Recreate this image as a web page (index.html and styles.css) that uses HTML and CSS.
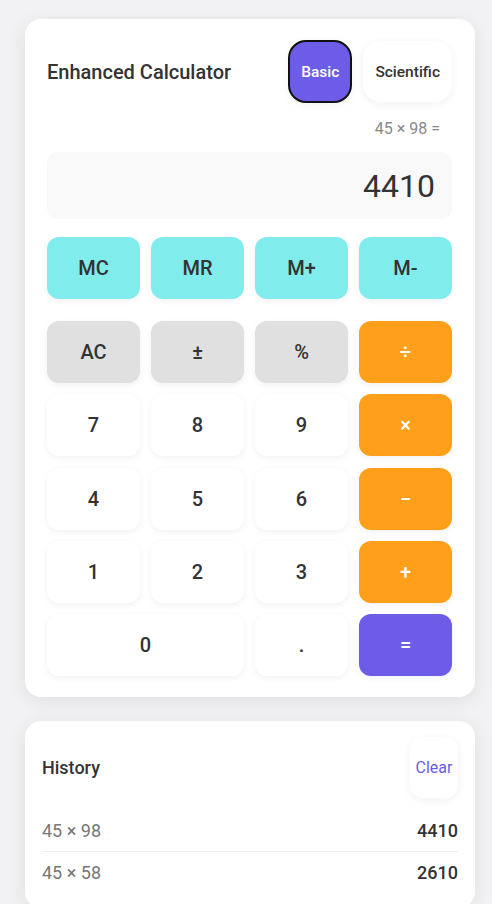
FILE: index.html
```html
<!DOCTYPE html>
<html lang="en">
<head>
<meta charset="utf-8">
<title>Enhanced Calculator</title>
<link rel="stylesheet" href="styles.css">
</head>
<body>
<main class="page">
  <section class="card calc">
    <header class="calc-header">
      <h1 class="title">Enhanced Calculator</h1>
      <div class="modes">
        <button class="mode mode-active">Basic</button>
        <button class="mode">Scientific</button>
      </div>
    </header>
    <div class="expression">45 × 98 =</div>
    <div class="display">4410</div>
    <div class="memory">
      <button class="key key-mem">MC</button>
      <button class="key key-mem">MR</button>
      <button class="key key-mem">M+</button>
      <button class="key key-mem">M-</button>
    </div>
    <div class="keys">
      <button class="key key-fn">AC</button>
      <button class="key key-fn">±</button>
      <button class="key key-fn">%</button>
      <button class="key key-op">÷</button>
      <button class="key">7</button>
      <button class="key">8</button>
      <button class="key">9</button>
      <button class="key key-op">×</button>
      <button class="key">4</button>
      <button class="key">5</button>
      <button class="key">6</button>
      <button class="key key-op">−</button>
      <button class="key">1</button>
      <button class="key">2</button>
      <button class="key">3</button>
      <button class="key key-op">+</button>
      <button class="key key-wide">0</button>
      <button class="key">.</button>
      <button class="key key-eq">=</button>
    </div>
  </section>
  <section class="card history">
    <header class="history-header">
      <h2 class="history-title">History</h2>
      <button class="clear">Clear</button>
    </header>
    <ul class="history-list">
      <li class="history-row"><span class="h-expr">45 × 98</span><span class="h-res">4410</span></li>
      <li class="history-row"><span class="h-expr">45 × 58</span><span class="h-res">2610</span></li>
    </ul>
  </section>
</main>
</body>
</html>
```

FILE: styles.css
```css
* { box-sizing: border-box; }
html, body { margin: 0; padding: 0; }
body {
  background: #f2f2f4;
  font-family: Roboto, "Liberation Sans", Arial, sans-serif;
  color: #333;
}
.page {
  padding: 19px 17px 0 25px;
  display: flex;
  flex-direction: column;
  gap: 24px;
}
.card {
  width: 450px;
  background: #fff;
  border-radius: 16px;
  box-shadow: 0 4px 20px rgba(0, 0, 0, 0.08);
}
.calc { padding: 21px 23px 21px 22px; }
.calc-header {
  display: flex;
  align-items: center;
  justify-content: space-between;
  height: 63px;
  margin-bottom: 16px;
}
.title {
  margin: 0;
  font-size: 20px;
  font-weight: 500;
  color: #333;
}
.modes { display: flex; align-items: center; gap: 11px; }
button {
  font-family: inherit;
  border: none;
  cursor: pointer;
}
.mode {
  height: 61px;
  padding: 0 12px;
  border-radius: 17px;
  background: #fff;
  color: #333;
  font-size: 15.5px;
  font-weight: 500;
  box-shadow: 0 2px 8px rgba(0, 0, 0, 0.06);
}
.mode-active {
  height: 63px;
  padding: 0 11px;
  background: #6c5ce7;
  color: #fff;
  border: 2px solid #111;
  border-radius: 18px;
}
.expression {
  text-align: right;
  padding-right: 12px;
  font-size: 16px;
  line-height: 20px;
  color: #888;
  margin-bottom: 13px;
}
.display {
  height: 67px;
  background: #f9f9f9;
  border-radius: 10px;
  padding: 0 17px;
  display: flex;
  align-items: center;
  justify-content: flex-end;
  font-size: 32px;
  font-weight: 400;
  color: #333;
  margin-bottom: 18px;
}
.memory, .keys {
  display: grid;
  grid-template-columns: repeat(4, 1fr);
  column-gap: 11px;
  grid-auto-rows: 62px;
}
.memory { margin-bottom: 22px; }
.keys { row-gap: 11.25px; }
.key {
  border-radius: 12px;
  background: #fff;
  color: #333;
  font-size: 20px;
  font-weight: 500;
  box-shadow: 0 2px 6px rgba(0, 0, 0, 0.06);
}
.key-mem { background: #81ecec; }
.key-fn { background: #e0e0e0; }
.key-op { background: #ff9f1a; color: #fff; }
.key-eq { background: #6c5ce7; color: #fff; }
.key-wide { grid-column: span 2; }
.history { padding: 16px 17px 16px 17px; }
.history-header {
  display: flex;
  align-items: center;
  justify-content: space-between;
  margin-bottom: 12px;
}
.history-title {
  margin: 0;
  font-size: 18px;
  font-weight: 500;
  color: #333;
}
.clear {
  height: 61px;
  width: 48px;
  padding: 0;
  border-radius: 12px;
  background: #fff;
  color: #6c5ce7;
  font-size: 16px;
  font-weight: 400;
  box-shadow: 0 2px 8px rgba(0, 0, 0, 0.06);
}
.history-list { list-style: none; margin: 0; padding: 0; }
.history-row {
  display: flex;
  justify-content: space-between;
  align-items: center;
  height: 41px;
  font-size: 18px;
}
.history-row + .history-row { border-top: 1px solid #eee; }
.h-expr { color: #777; }
.h-res { color: #333; font-weight: 500; }
```
